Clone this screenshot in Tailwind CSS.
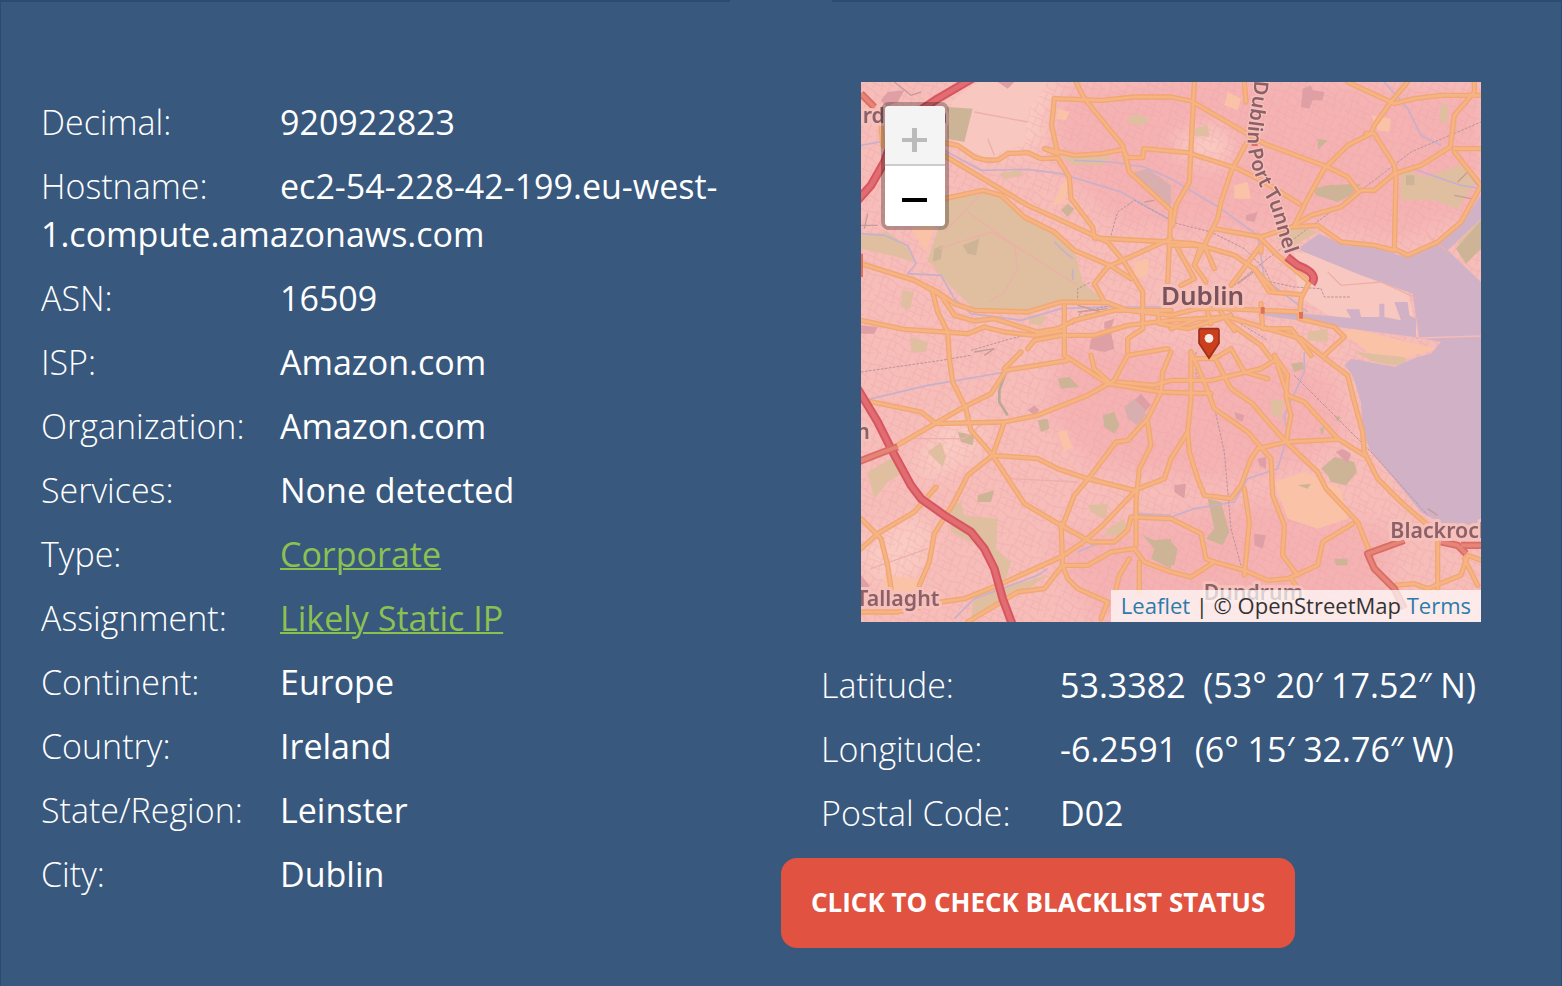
<!DOCTYPE html>
<html lang="en">
<head>
<meta charset="utf-8">
<meta name="viewport" content="width=device-width, initial-scale=1">
<title>IP Details</title>
<script src="https://cdn.jsdelivr.net/npm/@tailwindcss/browser@4"></script>
</head>
<body class="min-h-screen bg-[#38587e] font-['Open_Sans','Noto_Sans',sans-serif] text-[34px] leading-[48px] text-white">
<main class="flex min-h-screen flex-col border-x border-[#2a4b73]">
  <div class="flex h-[2px] gap-[102px]" aria-hidden="true">
    <div class="flex-1 bg-[#2a4b73]"></div>
    <div class="flex-1 bg-[#2a4b73]"></div>
  </div>
  <div class="grid grid-cols-2 pt-20">
    <dl class="flex flex-col gap-4 px-10 pt-4 font-medium">
      <div><dt class="inline-block w-[239px] font-light">Decimal:</dt><dd class="inline">920922823</dd></div>
      <div><dt class="inline-block w-[239px] font-light">Hostname:</dt><dd class="inline">ec2-54-228-42-199.eu-west-<wbr>1.compute.amazonaws.com</dd></div>
      <div><dt class="inline-block w-[239px] font-light">ASN:</dt><dd class="inline">16509</dd></div>
      <div><dt class="inline-block w-[239px] font-light">ISP:</dt><dd class="inline">Amazon.com</dd></div>
      <div><dt class="inline-block w-[239px] font-light">Organization:</dt><dd class="inline">Amazon.com</dd></div>
      <div><dt class="inline-block w-[239px] font-light">Services:</dt><dd class="inline">None detected</dd></div>
      <div><dt class="inline-block w-[239px] font-light">Type:</dt><dd class="inline"><a href="#" class="text-[#8cc152] underline decoration-2">Corporate</a></dd></div>
      <div><dt class="inline-block w-[239px] font-light">Assignment:</dt><dd class="inline"><a href="#" class="text-[#8cc152] underline decoration-2">Likely Static IP</a></dd></div>
      <div><dt class="inline-block w-[239px] font-light">Continent:</dt><dd class="inline">Europe</dd></div>
      <div><dt class="inline-block w-[239px] font-light">Country:</dt><dd class="inline">Ireland</dd></div>
      <div><dt class="inline-block w-[239px] font-light">State/Region:</dt><dd class="inline">Leinster</dd></div>
      <div><dt class="inline-block w-[239px] font-light">City:</dt><dd class="inline">Dublin</dd></div>
    </dl>
    <div>
      <div class="relative mr-20 ml-20 overflow-hidden">
        <svg class="block w-full" viewBox="0 0 1860 1620" role="img" aria-label="Map of Dublin">
          <defs>
            <filter id="tile" x="0" y="0" width="1" height="1"><feGaussianBlur stdDeviation="2"/></filter>
            <filter id="zone" x="-5%" y="-5%" width="110%" height="110%"><feGaussianBlur stdDeviation="28"/></filter>
            <pattern id="streets" width="97" height="83" patternUnits="userSpaceOnUse" patternTransform="rotate(24)">
              <path d="M0 9Q30 2 50 12T97 9M0 31H28L40 38H62M20 52Q50 44 97 56M5 70H60L75 64M10 0V31L16 52V83M27 9V36M40 52V83M58 12V46L66 83M80 9V50M86 56V83" fill="none" stroke="#ee9fa6" stroke-width="3" opacity=".4"/>
            </pattern>
            <g id="roads">
              <path d="M0 40L35 75M60 130L65 190M210 175L290 190L340 225Q380 240 415 232L440 215L500 212L540 230L590 228L625 285L630 350L695 435L700 465"/>
              <path d="M645 0L670 50L785 190L805 270L930 385"/>
              <path d="M580 50L720 55L820 45H930L990 57L1150 150L1210 185L1400 255L1460 285L1490 325"/>
              <path d="M580 50L572 130L590 215L550 200L640 220L720 215L785 203L800 227H845L848 200L980 212L1130 260L1210 300L1315 365"/>
              <path d="M240 215L400 310L500 370L600 415L740 480L790 540L845 630V740L800 770V810"/>
              <path d="M250 350L365 325L420 340L490 405L580 450L640 505L750 552L810 590"/>
              <path d="M700 468L930 480L1000 485L1120 520L1180 560L1225 630L1320 638"/>
              <path d="M930 470L740 555L700 605L730 660"/>
              <path d="M930 385L920 600"/>
              <path d="M0 545L160 595L230 630L280 665L340 685L500 690L600 660L740 662L800 685L930 700L1010 680L1090 680L1320 690"/>
              <path d="M170 600L240 640L280 700L340 717L400 710L480 735L530 750L590 740L640 715L760 685H930"/>
              <path d="M215 630L230 690L260 750L265 830L275 900L315 980L330 1045L395 1120L490 1265L600 1330L690 1380H760L800 1345L810 1305L930 1310L1020 1355L1035 1430L1060 1440L1150 1465L1220 1495L1280 1490L1370 1450L1385 1380L1475 1325"/>
              <path d="M0 715L130 742L250 750L320 755L370 735L430 750L520 760L610 745"/>
              <path d="M610 670V820L740 905L900 930L1050 935"/>
              <path d="M500 800L520 775L600 760L700 760L800 730L930 715L1100 705L1220 740L1320 770L1380 820L1460 880L1480 960L1505 1050L1510 1110L1550 1190L1620 1260L1700 1330"/>
              <path d="M10 955L180 990L225 1025L430 1020L530 1000L680 940L760 895L800 820L920 800"/>
              <path d="M100 1095L300 980L390 935L435 865L620 835"/>
              <path d="M430 860L480 810M430 1020L395 1120L530 1130L590 1160L680 1190L820 1225L910 1190L930 1130L980 1050"/>
              <path d="M395 1120L320 1180L280 1260L220 1355L205 1440L175 1510"/>
              <path d="M0 1400L50 1355L160 1290L225 1215M0 1310L60 1370L80 1450L90 1520"/>
              <path d="M0 1590L110 1590L240 1560L310 1550L410 1510L600 1425L660 1385L720 1335L825 1225"/>
              <path d="M320 1620L470 1530L550 1520L605 1450L680 1450L750 1410L820 1400L850 1440L930 1470L990 1485L1060 1440"/>
              <path d="M600 1325L605 1450L620 1490L650 1520L740 1560L720 1610M605 1330L640 1240L690 1180L765 1080L800 1075L860 1010L900 930L905 870L930 810"/>
              <path d="M860 1020L870 1090L835 1160L825 1260V1390M805 1430L775 1480L765 1520M835 1440V1530"/>
              <path d="M750 905L700 860L690 820M770 900L880 910L930 895H1050L1200 860L1240 835"/>
              <path d="M1000 0L985 300L945 370L935 430M1150 0L1155 60M1155 185L1110 270L1080 360L1070 410L1000 550"/>
              <path d="M1840 0L1840 30L1780 100L1768 195L1680 250L1600 275L1540 325H1500L1440 375L1350 400L1300 430"/>
              <path d="M1640 0L1590 60L1540 130L1530 155L1460 190L1390 260L1340 350L1300 430M1460 0L1600 65L1660 50L1740 40H1860"/>
              <path d="M1515 155H1540L1600 250L1605 290L1600 500L1640 520L1730 480L1800 420L1860 310L1780 210M1780 200H1860"/>
              <path d="M1060 440L1200 465L1290 435L1370 430L1440 480L1540 490L1600 505"/>
              <path d="M1190 460L1250 520L1345 600L1320 650L1315 710L1420 735L1450 765L1390 820"/>
              <path d="M930 490H1020L1000 550L1035 600M950 500L1000 590L960 610M1030 490L1060 560M1110 610L1200 490V510M1180 560L1240 625"/>
              <path d="M990 810L1030 900L1060 980L1160 1050L1230 1130L1235 1240L1270 1330L1265 1420L1310 1480"/>
              <path d="M1060 825L1110 920L1175 965L1230 1030L1275 1080L1370 1170L1395 1220L1490 1320L1530 1420"/>
              <path d="M1200 665L1205 740L1290 740L1350 820M1240 820L1280 940L1330 960L1430 1070L1510 1120M1240 820L1280 880L1275 940L1290 1000L1275 1080"/>
              <path d="M1275 1080L1430 1072M1275 1080L1190 1100L1170 1130L1140 1210L1110 1250L1030 1240L1010 1190L985 1110L980 1050L990 950V810"/>
              <path d="M1150 1220L1165 1320L1150 1480M1100 720L1200 790L1230 830M990 830H1060L1110 800L1150 870L1220 890"/>
              <path d="M890 690L895 725L980 740L1110 700M1080 690L1120 745M930 740L1010 710M1040 690L1050 725"/>
              <path d="M1730 1380V1520M1600 1510L1660 1505L1700 1520L1800 1480L1820 1420L1860 1435M1810 1430L1850 1510M1290 1490L1320 1530"/>
            </g>
            <path id="tunnel" d="M1180 -5C1178 60 1158 120 1160 190C1170 270 1200 320 1218 350C1242 400 1250 460 1285 550"/>
          </defs>
          <g filter="url(#tile)">
          <rect width="1860" height="1620" fill="#f6bdb9"/>
          <g filter="url(#zone)">
            <path d="M550 40L1100 -30L1860 40V380L1600 470L1400 420L1180 450L780 430L600 260ZM600 780L1400 860L1460 1050L1300 1150L1050 1200L700 1150L560 1000ZM560 1380L1200 1250L1600 1350L1560 1600H700Z" fill="#f5b2b3"/>
            <path d="M250 50L500 0H640L570 60L540 190L480 210L380 230L280 190ZM0 1380L150 1300L220 1340L180 1480L60 1510L0 1450ZM250 1000L380 1020L360 1100L250 1180L150 1180ZM940 170L1060 130L1120 190L1090 250L960 220Z" fill="#f9cbc2"/>
          </g>
          <rect width="1860" height="1620" fill="url(#streets)"/>
          <path d="M270 60L350 0H560L500 90L490 190L440 200L380 230L280 180ZM1300 510L1400 520L1640 625L1670 760L1400 700L1310 640Z" fill="#f8c7bf"/>
          <g fill="#fac2a7">
            <path d="M1240 1200L1330 1170L1440 1220L1460 1310L1370 1340L1280 1310ZM590 80L625 90L615 115L585 110ZM1100 30L1140 50L1130 85L1090 70ZM150 440L230 410L195 510ZM590 1050L615 1045L635 1095L610 1110ZM70 1480L170 1490L180 1550H65ZM820 540L865 530L860 580L820 590ZM600 310L625 290L610 365L575 370ZM1530 100L1590 110L1585 150L1550 145ZM1120 310L1160 300L1170 350L1120 350ZM1440 750L1550 830L1620 830L1730 800L1640 780L1480 740Z"/>
          </g>
          <g fill="#dfbf9f">
            <path d="M210 365L365 325L420 345L490 410L585 460L640 505L665 600L710 640L720 655L600 665L500 685L340 682L270 615L200 535L235 430Z"/>
            <path d="M0 460L80 450L135 490L160 540L90 520L0 500ZM20 1170L90 1130L130 1170L80 1200L40 1250ZM270 1270L300 1260L310 1300L410 1310L405 1400L450 1440L435 1490H400L370 1400L270 1350ZM340 1540L560 1480L500 1520L330 1610ZM600 225L750 225L720 250L640 250ZM800 105L830 95L870 115L840 130L805 125ZM415 275L470 265L490 280L430 290ZM1620 260L1690 285L1800 250L1850 290L1790 380L1720 355L1620 355ZM1245 470L1300 430L1370 450L1300 490ZM740 1340L790 1310L800 1360L730 1360ZM1790 480L1860 410V500L1800 530ZM1480 810L1630 825L1640 855L1540 840ZM125 625L158 630L148 680L120 675ZM150 765L200 780L195 810H150ZM500 700L560 705L540 730L505 725ZM1740 70L1760 65V130L1735 115ZM1000 140L1040 130L1045 165L1000 160ZM1230 950L1270 955L1260 1010L1230 995ZM200 1110L240 1080L255 1125L245 1155L220 1130ZM1340 750L1400 740L1400 780L1340 775ZM680 1270L740 1265L735 1310L690 1290Z"/>
          </g>
          <g fill="#cdb497">
            <path d="M258 75L335 80L310 180L258 170ZM1355 320L1400 310L1500 305L1470 340L1430 360L1365 340ZM1785 500L1860 415V500L1815 545ZM1040 1250L1080 1260L1105 1350L1085 1390L1035 1370L1060 1340ZM845 1360L880 1375L930 1370V1460L870 1430L880 1400ZM930 1380L950 1400L940 1450H930ZM1380 1160L1420 1125L1480 1140L1488 1170L1455 1210L1410 1200L1400 1180Z"/>
            <path d="M530 1015L560 1010L565 1040L540 1050ZM725 1000L760 990L775 1030L760 1055L730 1035ZM590 890L625 885L655 915L600 920ZM290 1050L340 1060L335 1090L300 1080ZM350 1240L400 1225L390 1260H350ZM305 490L355 470L345 520L320 515ZM220 500L245 490L240 530L215 540ZM600 385L620 365L640 380L620 405ZM1290 845L1325 840L1330 860L1300 870ZM1375 1040L1390 1035L1385 1060ZM1420 1000L1440 1005L1430 1020ZM1635 280H1660V310H1635ZM1370 170L1400 175L1370 205ZM1310 1210L1350 1205L1340 1220ZM1420 1430H1460V1450H1425Z"/>
          </g>
          <g fill="#dfa0a5">
            <path d="M60 55L80 30L130 25L110 60L75 75ZM410 0H460L440 20ZM1325 20L1350 10L1355 25L1390 30L1385 55L1355 55L1345 80L1320 75ZM1155 400L1190 390L1180 420L1155 415ZM690 770L750 750L760 800L730 810L685 800ZM0 730L50 735L40 755H0ZM500 985L520 970L535 985L520 1000ZM820 955L840 935L870 970L850 990ZM1425 1110L1445 1100L1470 1115L1460 1145ZM940 1210L975 1205L970 1250L940 1230ZM1180 1355L1215 1360L1205 1400L1180 1390ZM1120 990L1150 1000L1145 1020L1125 1010ZM730 720L760 710L750 740H730ZM0 1480L25 1510L20 1540L0 1530ZM1190 1130L1215 1125V1160L1195 1150Z"/>
          </g>
          <path d="M820 270L860 260L930 310V380L870 330L830 300ZM790 975L820 950L850 980L855 1000L830 1030L800 1010Z" fill="#d8afae"/>
          <!-- Dublin Bay, the Liffey mouth and the harbour -->
          <path d="M1310 500L1375 455L1450 490L1540 495L1600 515L1640 525L1730 485L1800 425L1860 340V410L1760 505L1860 600V1330H1750L1680 1290L1590 1180L1530 1110L1505 1050L1500 960L1475 880L1450 850L1470 830L1600 855L1670 825L1710 815L1740 780L1660 765L1430 735L1310 715L1200 700V690L1330 695L1470 708L1455 682H1495L1500 705H1555V665H1570V705L1620 715L1600 660H1640L1645 700L1665 710V770L1675 770L1655 635L1500 580L1330 510Z" fill="#d0b1c6"/>
          <path d="M1675 768L1860 762" stroke="#f5bcb8" stroke-width="4"/>
          <g fill="none" stroke="#c9b0ca" stroke-width="5">
            <path d="M0 190L80 175M250 205L360 265L500 262L600 275L780 330L930 415M0 455L70 460L140 490L165 545L140 575L240 580L280 650L330 695L480 715L600 680L720 675L930 675M580 480L600 500L635 530M635 560V595M640 235L750 240L850 255L930 290M930 290L1080 380L1190 460L1210 590L1340 690M10 955L200 910L435 870M280 1610L340 1550L530 1480L560 1460M650 1410L720 1380M930 1305L1000 1280L1120 1260L1160 1190L1250 1160L1280 1060L1270 1000L1330 870V810M830 1295L930 1300M1570 0L1640 80L1680 160L1740 190M1640 255L1800 310L1860 320M1200 690L1340 705"/>
          </g>
          <path d="M435 870L415 925V960L440 1000" fill="none" stroke="#bba993" stroke-width="8"/>
          <g fill="none" stroke="#edb0a8" stroke-width="4">
            <path d="M320 390L460 490L650 610M460 490L470 560L430 630L385 660M460 490L390 450L235 500M360 335L250 450M340 90L500 120M380 170L400 220M130 1070H310L370 1020M30 1460L200 1400M450 1190L650 1200M1400 570L1440 610L1560 600L1670 650M1700 460L1760 510"/>
          </g>
          <g fill="none" stroke="#b7959c" stroke-width="3" stroke-dasharray="8 4">
            <path d="M0 870L240 835L330 820M330 805L450 770L640 725L660 690L750 670M750 460L770 390L820 355L930 415M650 660V620L690 600M930 420L1050 450L1150 500L1210 560L1230 600L1300 615L1380 620L1390 645H1470M1120 610L1220 530L1340 440L1540 295L1650 210L1860 120M1080 650L1130 720L1220 775M1300 880L1540 1120L1700 1300M1005 810V880L1050 930L1090 1110L1110 1340L1140 1450"/>
          </g>
          <g fill="none" stroke="#c59c97" stroke-width="4"><path d="M340 810L400 800L370 820M650 670L720 690L670 700M650 690L740 680M1130 605L1190 560M850 360L880 355M100 0L150 40L180 30M1790 300L1820 270L1850 310M1780 340L1830 350M1730 1300L1700 1280M10 440L20 395M0 430H50"/></g>
          <use href="#roads" fill="none" stroke="#f1a773" stroke-width="16" stroke-linejoin="round" stroke-linecap="round"/>
          <use href="#roads" fill="none" stroke="#f6b482" stroke-width="8" stroke-linejoin="round" stroke-linecap="round"/>
          <g fill="none" stroke="#d75562" stroke-linejoin="round">
            <path stroke-width="26" d="M350 -20L230 50L110 130L70 240L30 310L-10 355M-10 920L50 1020L90 1100L150 1210L180 1250L250 1300L330 1350L370 1400L400 1460L425 1550L455 1630M1278 525L1310 550Q1375 575 1352 605"/>
            <path stroke="#e16d70" stroke-width="14" d="M350 -20L230 50L110 130L70 240L30 310L-10 355M-10 920L50 1020L90 1100L150 1210L180 1250L250 1300L330 1350L370 1400L400 1460L425 1550L455 1630M1278 525L1310 550Q1375 575 1352 605"/>
            <path stroke="#d96d65" stroke-width="22" d="M-10 1140L80 1105L110 1095M0 35L40 75M1630 1375L1520 1415L1540 1460L1600 1520L1630 1580M1740 1380L1790 1390L1815 1415M1800 1390H1860"/>
            <path stroke="#e68478" stroke-width="11" d="M-10 1140L80 1105L110 1095M0 35L40 75M1630 1375L1520 1415L1540 1460L1600 1520L1630 1580M1740 1380L1790 1390L1815 1415M1800 1390H1860"/>
            <path stroke="#df715c" stroke-width="12" d="M0 515V585M1172 186H1190M1205 675V695M1320 690V710"/>
          </g>
          <g class="font-['Noto_Sans','Open_Sans',sans-serif] font-semibold" fill="#8b6068" stroke="#f7c1bb" stroke-width="18" stroke-linejoin="round" paint-order="stroke" font-size="64">
            <text x="5" y="122">rd</text><text x="218" y="122">n</text>
            <text x="-14" y="1072">n</text>
            <text x="-14" y="1572">Tallaght</text>
            <text x="1588" y="1367">Blackrock</text>
            <text x="1028" y="1553">Dundrum</text>
            <text x="900" y="670" font-size="78" fill="#79525c">Dublin</text>
            <text font-size="60" stroke-width="8"><textPath href="#tunnel" startOffset="0">Dublin Port Tunnel</textPath></text>
          </g>
          </g>
          <path d="M1016 740H1070Q1074 740 1074 745V784L1044 829L1014 784V745Q1014 740 1019 740Z" fill="#cb3f1d" stroke="#9c3018" stroke-width="5"/>
          <circle cx="1044" cy="769" r="13" fill="#f8efec"/>
        </svg>
        <div class="absolute top-5 left-5 flex w-[68px] flex-col overflow-hidden rounded-lg border-4 border-black/25 bg-clip-padding">
          <button type="button" disabled aria-label="Zoom in" class="flex h-[60px] items-center justify-center border-b-2 border-[#ccc] bg-[#f4f4f4] pt-[10px] text-[#bbb]">
            <svg class="h-6 w-[26px]" viewBox="0 0 26 24" aria-hidden="true"><path d="M0 12H25" stroke="currentColor" stroke-width="4"/><path d="M12.5 0V24" stroke="currentColor" stroke-width="5"/></svg>
          </button>
          <button type="button" aria-label="Zoom out" class="flex h-[60px] items-center justify-center bg-white pt-2 text-black">
            <svg class="h-6 w-[26px]" viewBox="0 0 26 24" aria-hidden="true"><path d="M0 12H25" stroke="currentColor" stroke-width="4"/></svg>
          </button>
        </div>
        <div class="absolute right-0 bottom-0 bg-white/70 px-[10px] pb-[2px] text-[22px] leading-[30px] text-[#333]"><a href="#" class="text-[#2a7cab]">Leaflet</a> | © OpenStreetMap <a href="#" class="text-[#2a7cab]">Terms</a></div>
      </div>
      <dl class="flex flex-col gap-4 pt-[39px] pl-10 font-medium">
        <div><dt class="inline-block w-[239px] font-light">Latitude:</dt><dd class="inline">53.3382&nbsp; (53° 20′ 17.52″ N)</dd></div>
        <div><dt class="inline-block w-[239px] font-light">Longitude:</dt><dd class="inline">-6.2591&nbsp; (6° 15′ 32.76″ W)</dd></div>
        <div><dt class="inline-block w-[239px] font-light">Postal Code:</dt><dd class="inline">D02</dd></div>
      </dl>
      <button type="button" class="mt-[21px] block h-[90px] rounded-2xl bg-[#e15241] px-[30px] pb-[2px] text-[26px] font-bold">CLICK TO CHECK BLACKLIST STATUS</button>
    </div>
  </div>
</main>
</body>
</html>
